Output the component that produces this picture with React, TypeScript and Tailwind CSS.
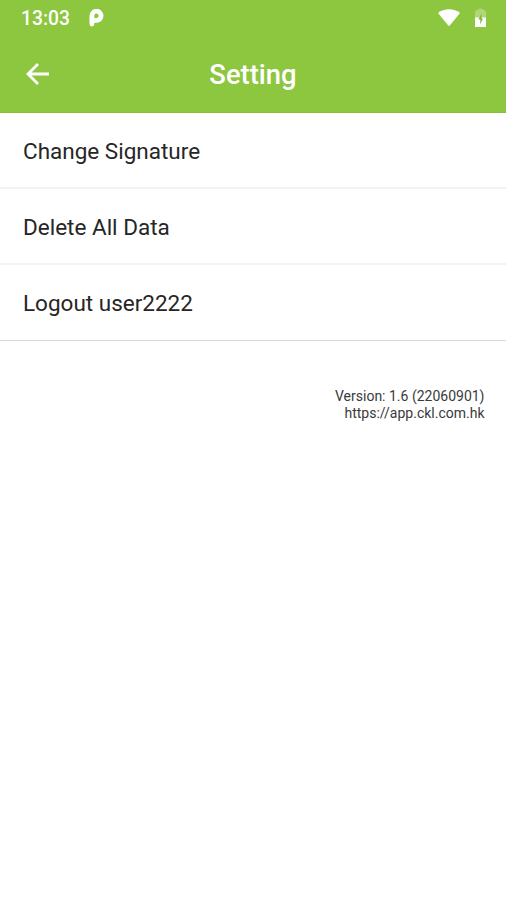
import React from 'react';
import clsx from 'clsx';

const items = ['Change Signature', 'Delete All Data', 'Logout user2222'];

const StatusBar = () => (
  <div className="flex h-9 items-center justify-between pl-[21px] pr-5">
    <div className="flex items-center gap-[19px]">
      <span className="pt-0.5 text-[19.3px] font-medium leading-[34px]">13:03</span>
      <svg width="15" height="18" viewBox="0 0 15 18" fill="none">
        <path d="M2.9 15V7.2A4.6 4.6 0 1 1 7.5 11.4H6" stroke="currentColor" strokeWidth="4.8" strokeLinecap="round" />
      </svg>
    </div>
    <div className="flex items-center gap-[15px]">
      <svg width="22" height="18" viewBox="0 0 22 18" fill="currentColor">
        <path d="M0 4C6-1 16-1 22 4L12 16.2q-1 1-2 0Z" />
      </svg>
      <svg width="11" height="20" viewBox="0 0 11 20" fill="currentColor">
        <path d="M0 10V4q0-1.5 2-2 1.5-1.5 3.5-1.5T9 2q2 .5 2 2v6z" opacity=".3" />
        <path d="M0 9.5h11V19H0z" />
        <path d="M6.5 5.5L3.5 11.5h2L5 16.5 8 10.5H6.3z" fill="#7ab32e" />
      </svg>
    </div>
  </div>
);

const Header = () => (
  <header className="h-[113px] border-b border-[#86c132] bg-[#8dc63f] text-white">
    <StatusBar />
    <div className="grid h-[76px] grid-cols-[74px_1fr_74px] items-center">
      <button className="flex h-full items-center pl-[26px]" aria-label="Back">
        <svg width="23" height="22" viewBox="0 0 23 22" fill="none" stroke="currentColor" strokeWidth="2.8">
          <path d="M23 11H2M12 1L2 11l10 10" />
        </svg>
      </button>
      <h1 className="pt-1 text-center text-[27.4px] font-medium">Setting</h1>
    </div>
  </header>
);

export default function App() {
  return (
    <div className="min-h-screen bg-white font-[Roboto,sans-serif] text-[#262626]">
      <Header />
      <ul>
        {items.map((item, i) => (
          <li
            key={item}
            className={clsx(
              'flex h-[76px] items-center px-[23px] pt-[3px] text-[22.5px]',
              i < items.length - 1 ? 'border-b-2 border-[#f3f3f3]' : 'border-b border-[#d9d9d9]',
            )}
          >
            {item}
          </li>
        ))}
      </ul>
      <footer className="mt-[47px] pr-[21.5px] text-right text-sm leading-[17px] text-[#3a3a3a]">
        <p>Version: 1.6 (22060901)</p>
        <p>https://app.ckl.com.hk</p>
      </footer>
    </div>
  );
}
